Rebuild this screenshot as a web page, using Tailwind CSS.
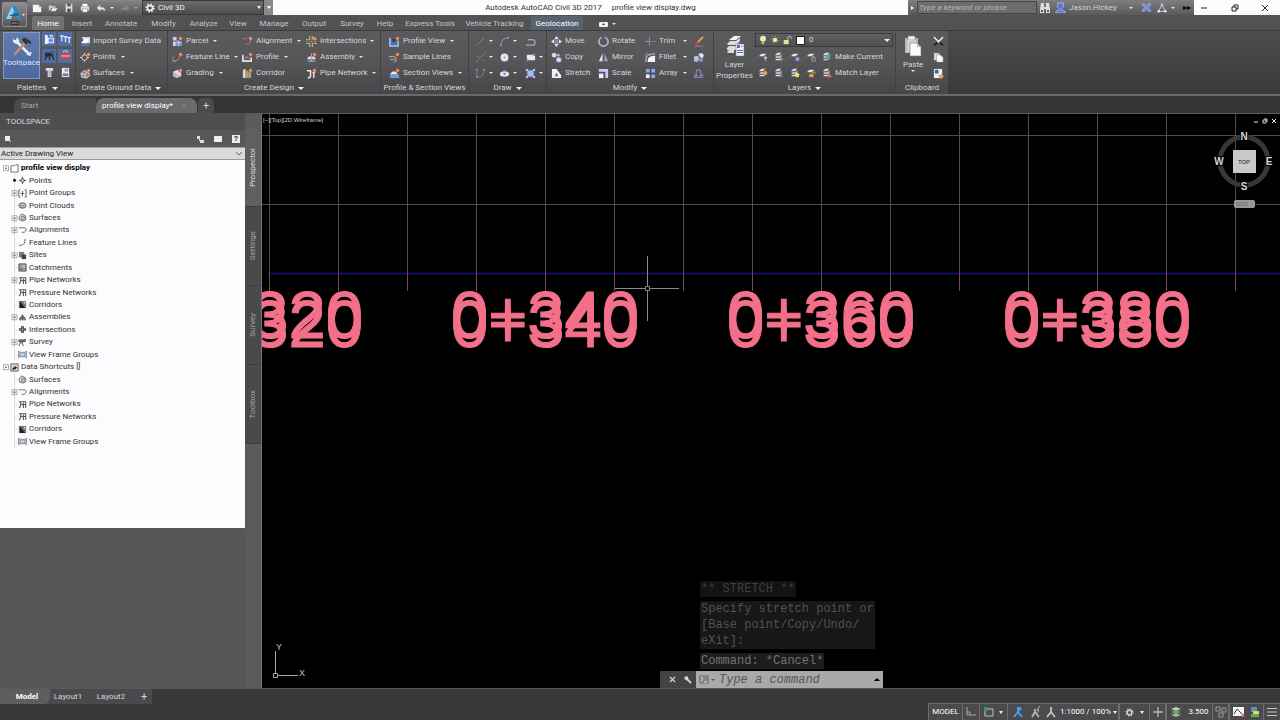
<!DOCTYPE html>
<html lang="en">
<head>
    <meta charset="UTF-8">
    <meta name="viewport" content="width=device-width, initial-scale=1.0">
    <title>Autodesk AutoCAD Civil 3D 2017</title>
    <script src="https://cdn.jsdelivr.net/npm/@tailwindcss/browser@4"></script>
</head>
<body class="flex h-screen flex-col overflow-hidden bg-[#38373a] font-['Roboto','Open_Sans',sans-serif] text-[8px] leading-[12px] text-[#d8d7d9]">

    <!-- Icon set -->
    <svg class="hidden" xmlns="http://www.w3.org/2000/svg">
        <defs>
            <symbol id="new" viewBox="0 0 12 12"><path d="M1 2h7l3 3v6H1z" fill="#f4f4f4"/><path d="M8 2v3h3" fill="#aaa"/></symbol>
            <symbol id="open" viewBox="0 0 12 12"><path d="M1 10V3h3l1 1h4v2H4z" fill="#cfcfcf"/><path d="M3 10l2-4h7l-3 4z" fill="#f2f2f2" stroke="#666" stroke-width=".5"/></symbol>
            <symbol id="save" viewBox="0 0 12 12"><path d="M2 1h8v10H2z" fill="#d8d8d8"/><path d="M4 1h4v3H4zM4 7h4v4H4z" fill="#4a4a4e"/></symbol>
            <symbol id="print" viewBox="0 0 12 12"><path d="M3 1h6v3H3z" fill="#fff"/><path d="M1 4h10v5H1z" fill="#dcdcdc"/><path d="M3 7h6v4H3z" fill="#fff" stroke="#777" stroke-width=".6"/></symbol>
            <symbol id="undo" viewBox="0 0 12 12"><path d="M5 2v3h2q4 0 4 5-2-3-6-2v2L1 6z" fill="#e2e2e2"/></symbol>
            <symbol id="redo" viewBox="0 0 12 12"><path d="M7 2v3H5q-4 0-4 5 2-3 6-2v2l4-4z" fill="#8a898d"/></symbol>
            <symbol id="gear" viewBox="0 0 12 12"><circle cx="6" cy="6" r="4.6" fill="none" stroke="currentColor" stroke-width="1.8" stroke-dasharray="1.8 1.8"/><circle cx="6" cy="6" r="3" fill="none" stroke="currentColor" stroke-width="1.8"/></symbol>
            <symbol id="spark" viewBox="0 0 12 12"><circle cx="9.3" cy="2.7" r="2.1" fill="#e2703a"/><circle cx="9.3" cy="2.7" r=".8" fill="#ffc59a"/></symbol>

            <symbol id="tools" viewBox="0 0 22 20"><path d="M6 6l12 12" stroke="#e9e9ec" stroke-width="2.6" stroke-linecap="round"/><path d="M2 2v4l3 2 3-1 0-3-2-3-1 3-2 0z" fill="#e9e9ec"/><path d="M16 18l3 1 1-3" fill="none" stroke="#e9e9ec" stroke-width="1.5"/><path d="M14 7L4 18" stroke="#c98a6a" stroke-width="2.6" stroke-linecap="round"/><path d="M10 3l4-2 6 4 1 4-2-1-2-1-2 2-3-3z" fill="#36363c" stroke="#8d8d96" stroke-width=".5"/></symbol>
            <symbol id="pal1" viewBox="0 0 12 12"><path d="M1 1h3v10H1zM4 4h7v6H4z" fill="#eef3fb"/><path d="M5 5h5v4H5z" fill="#6f96d8"/><path d="M6 1h4v2H6z" fill="#c7d9f4"/></symbol>
            <symbol id="pal2" viewBox="0 0 12 12"><path d="M0 2h4M4 3h4M8 4h4M2 2v6M6 3v6M10 4v6" stroke="#dfe8f8" stroke-width="1.4" fill="none"/></symbol>
            <symbol id="pal3" viewBox="0 0 12 12"><path d="M1 3h9v4H1z" fill="#2c2c30"/><path d="M4 5L1 11M6 5v6M8 5l3 6" stroke="#26262a" stroke-width="1.3"/><circle cx="9" cy="3" r="2" fill="#55555c"/></symbol>
            <symbol id="pal4" viewBox="0 0 12 12"><path d="M4 3V1h4v2" fill="none" stroke="#dcdcdc"/><path d="M1 3h10v7H1z" fill="#c34b4b"/><path d="M1 6h10v1H1z" fill="#f6dada"/></symbol>
            <symbol id="pal5" viewBox="0 0 12 12"><path d="M2 1h8v3H8v7H4V4H2z" fill="#dddddf"/><path d="M5 4h2v6H5z" fill="#aaaaae"/></symbol>
            <symbol id="pal6" viewBox="0 0 12 12"><path d="M2 1h8v10H2z" fill="#ececef"/><path d="M3 7h6v3H3z" fill="#5b78c4"/><path d="M5 2h4v3H5z" fill="#9a9aa2"/></symbol>

            <symbol id="import" viewBox="0 0 12 12"><path d="M2 1h9v7H5z" fill="#c9d9ee"/><path d="M1 8l4-5h5l-3 5z" fill="#fff"/><path d="M1 9h9v2H1z" fill="#4c7bc4"/></symbol>
            <symbol id="points" viewBox="0 0 12 12"><path d="M5 1v10M0 6h10" stroke="#ddd"/><circle cx="5" cy="6" r="3" fill="#555" stroke="#ddd"/><use href="#spark"/></symbol>
            <symbol id="surfaces" viewBox="0 0 12 12"><path d="M1 6l3-3 5 1 2 4-4 3-5-1z" fill="#888d95" stroke="#eee" stroke-width=".8"/><path d="M1 6l4 1 4-3M5 7l2 4" stroke="#eee" stroke-width=".8" fill="none"/><use href="#spark"/></symbol>
            <symbol id="parcel" viewBox="0 0 12 12"><path d="M1 1h4v4H1zM1 6h4v5H1z" fill="#c9d0e8"/><path d="M4 4l7 2v5H4z" fill="#7d90cf"/><path d="M5 7h5M7 5v6" stroke="#dde2f6" stroke-width=".7"/><use href="#spark"/></symbol>
            <symbol id="feature" viewBox="0 0 12 12"><path d="M1 10q7 0 8-7" stroke="#9a9aa0" fill="none"/><path d="M1 5v5h3" stroke="#8aa08a" fill="none"/><use href="#spark"/></symbol>
            <symbol id="grading" viewBox="0 0 12 12"><path d="M1 4l5-2 4 3v4l-5 2-4-2z" fill="#d9dbe2"/><path d="M1 5l8 5M1 7l5 4" stroke="#8d93a8"/><use href="#spark"/></symbol>
            <symbol id="align" viewBox="0 0 12 12"><path d="M1 3h4M5 9q5 0 4-5" stroke="#8d8db4" fill="none"/><path d="M3 9h2" stroke="#c66"/><use href="#spark"/></symbol>
            <symbol id="profile" viewBox="0 0 12 12"><path d="M1 3v7h9V6" stroke="#e4e4ea" stroke-width="1.8" fill="none"/><path d="M3 8l2-3 3 2" stroke="#92a8dc" fill="none"/><use href="#spark"/></symbol>
            <symbol id="corridor" viewBox="0 0 12 12"><path d="M1 2l3-1v10H1z" fill="#d8d8da"/><path d="M4 3h3v8H4z" fill="#b59a5f"/><path d="M7 4l3 1v6H7z" fill="#86b080"/><use href="#spark"/></symbol>
            <symbol id="intersect" viewBox="0 0 12 12"><path d="M4 0v4H0M7 0v4h5M4 12V8H0M7 12V8h5" stroke="#b9c98d" fill="none"/><path d="M5.500 0v12M0 6h12" stroke="#8f8f70" stroke-dasharray="2 1"/><use href="#spark"/></symbol>
            <symbol id="assembly" viewBox="0 0 12 12"><path d="M1 8l2-3h6l2 3z" fill="#d6dbe8"/><path d="M6 1v10M2 10h8" stroke="#9aa6cc" stroke-width="1.2"/><use href="#spark"/></symbol>
            <symbol id="pipe" viewBox="0 0 12 12"><path d="M1 3h4v5q0 3-3 3M7 5h3M8.500 5v6" stroke="#eaeaee" stroke-width="1.6" fill="none"/><use href="#spark"/></symbol>
            <symbol id="profview" viewBox="0 0 12 12"><path d="M1 2v9h9V5" fill="#4c70b4" stroke="#b8cdf2" stroke-width="1.4"/><path d="M3 4l2 3 3-2v-2H3z" fill="#404046"/><use href="#spark"/></symbol>
            <symbol id="sample" viewBox="0 0 12 12"><path d="M0 5h5q3 0 3 3t-3 3" stroke="#b4b4bc" fill="none"/><path d="M1 8h6" stroke="#b4b4bc"/><use href="#spark"/></symbol>
            <symbol id="section" viewBox="0 0 12 12"><path d="M1 7q4-7 9 0z" fill="#e6ecf8"/><path d="M1 7h10v4H1z" fill="#6f98dc"/><use href="#spark"/></symbol>

            <symbol id="line" viewBox="0 0 12 12"><path d="M2 10L10 2" stroke="#8d8c90"/></symbol>
            <symbol id="arc" viewBox="0 0 12 12"><path d="M2 11Q2 2 10 2" stroke="#9f9fc0" fill="none"/><circle cx="2" cy="10" r="1" fill="#8ea3e0"/><circle cx="10" cy="2" r="1" fill="#8ea3e0"/></symbol>
            <symbol id="pline" viewBox="0 0 12 12"><path d="M1 10h7q3 0 3-3t-3-3H4" stroke="#a6a6bc" stroke-width="1.300" fill="none"/><circle cx="4" cy="4" r="1" fill="#8ea3e0"/></symbol>
            <symbol id="xline" viewBox="0 0 12 12"><path d="M1 11L11 1" stroke="#8d8c90" stroke-dasharray="3 1"/><path d="M2 4l2 2M8 8l2 2" stroke="#8d8c90"/></symbol>
            <symbol id="circle" viewBox="0 0 12 12"><circle cx="6" cy="6" r="4.300" fill="#e4e4ee"/><circle cx="6" cy="6" r="1" fill="#8a9be0"/></symbol>
            <symbol id="rect" viewBox="0 0 12 12"><path d="M2 3h9v6H2z" fill="#e8e8f0"/><circle cx="2.500" cy="9" r="1.300" fill="#6c88dc"/><circle cx="10" cy="3" r="1.300" fill="#6c88dc"/></symbol>
            <symbol id="spline" viewBox="0 0 12 12"><path d="M2 2v8q8 0 8-8" stroke="#85858c" fill="none"/><path d="M1 1h2v2H1zM1 9h2v2H1zM9 1h2v2H9z" fill="#7d92a8"/></symbol>
            <symbol id="ellipse" viewBox="0 0 12 12"><ellipse cx="6" cy="6.500" rx="5" ry="3" fill="#e4e4ee"/><circle cx="6" cy="6.500" r="1.200" fill="#5c78d4"/><circle cx="6" cy="3" r="1" fill="#8a9be0"/></symbol>
            <symbol id="hatch" viewBox="0 0 12 12"><path d="M2.500 2.500h7v7h-7z" fill="#a9bdf0" stroke="#6f8de0"/><path d="M1 1h2v2H1zM9 1h2v2H9zM1 9h2v2H1zM9 9h2v2H9z" fill="#dfe4fa"/></symbol>

            <symbol id="move" viewBox="0 0 12 12"><path d="M6 0l2.500 3.500h-5zM6 12l2.500-3.500h-5zM0 6l3.500-2.500v5zM12 6L8.500 3.500v5z" fill="#e8e8ee"/><path d="M4.500 4.500h3v3h-3z" fill="#7b97e4"/></symbol>
            <symbol id="copy" viewBox="0 0 12 12"><circle cx="3.500" cy="3.500" r="2.600" fill="#d8d8e0"/><circle cx="8" cy="3.500" r="1.500" fill="#b4b4c4"/><circle cx="8.500" cy="8.500" r="3" fill="#a8b8ec"/><circle cx="8.500" cy="8.500" r="1.500" fill="#e8ecfa"/></symbol>
            <symbol id="stretch" viewBox="0 0 12 12"><path d="M1 1h5l5 7v3H1z" fill="#f1f1f4"/><path d="M4 9l2-4 2 4z" fill="#4d6cc0"/></symbol>
            <symbol id="rotate" viewBox="0 0 12 12"><path d="M4 1.500A5 5 0 1 0 8 1.500" stroke="#b9bcd8" stroke-width="1.600" fill="none"/><path d="M6.500 0L10 1.500 7.500 4z" fill="#7e92dc"/></symbol>
            <symbol id="mirror" viewBox="0 0 12 12"><path d="M5 1v9H1z" fill="#e3e3e8"/><path d="M7 1v9h4z" fill="#8fa3cc"/></symbol>
            <symbol id="scale" viewBox="0 0 12 12"><path d="M1 1h10v10H8V4H1z" fill="#c5cdf0"/><path d="M1 6h5v5H1z" fill="#f2f2f6"/></symbol>
            <symbol id="trim" viewBox="0 0 12 12"><path d="M0 6h5M5 1v10" stroke="#9494b4"/><path d="M7 6h5" stroke="#7d96e0" stroke-dasharray="2 1"/></symbol>
            <symbol id="fillet" viewBox="0 0 12 12"><path d="M3 11V9q0-5 8-5v7z" fill="#f3f3f6"/><path d="M1 11V8q0-6 10-6" stroke="#dcdce6" fill="none"/><path d="M1 5V2h3" stroke="#8e9ccc" fill="none"/></symbol>
            <symbol id="array" viewBox="0 0 12 12"><path d="M1 1h4v4H1zM7 1h4v4H7zM7 7h4v4H7z" fill="#8fabf0"/><path d="M1 7h4v4H1z" fill="#f0f0f4"/></symbol>
            <symbol id="erase" viewBox="0 0 12 12"><path d="M11 1L5 7" stroke="#e4a65e" stroke-width="1.800"/><path d="M5 6L2 9l1 1 3-2z" fill="#d2424c"/><path d="M2 11h9" stroke="#a58d62"/></symbol>
            <symbol id="explode" viewBox="0 0 12 12"><path d="M1 5l4-1 2 3-2 4-4-1z" fill="#b5c0e8"/><path d="M6 2l4-1 2 3-2 3-3-2z" fill="#dadff2"/><path d="M7 7l4 0-1 4-3-1z" fill="#8fa0dc"/></symbol>
            <symbol id="offset" viewBox="0 0 12 12"><path d="M1 10h10M1 8h3q-2-6 2-6t2 6h3" stroke="#8591bc" fill="none" stroke-width="1.200"/></symbol>

            <symbol id="layers" viewBox="0 0 20 22"><path d="M4 5l5-4h7l-5 4z" fill="#f4f4f6"/><path d="M2 9l3-3h6l4-3v3l-4 4H3zM2 13l2-2h7l3-3v3l-3 4H2zM2 17l2-2h5v3H3z" fill="#dcdce0"/><path d="M11 9h8v12h-8z" fill="#f0f2f8" stroke="#777" stroke-width=".5"/><path d="M12 10h3v3h-3zM12 15h6v1h-6zM12 17h6v1h-6z" fill="#4c74c0"/><path d="M16 11h2v1h-2z" fill="#888"/></symbol>
            <symbol id="stack" viewBox="0 0 12 12"><path d="M1 4l3-3h5L6 4zM1 7l2-2h4l2-2v2L7 7zM1 10l2-2h4l2-2v2l-2 2z" fill="#dadadf"/></symbol>
            <symbol id="sheet" viewBox="0 0 12 12"><path d="M1 5l3-3h6L7 5z" fill="#e2e2e6"/></symbol>
            <symbol id="bulb" viewBox="0 0 12 12"><circle cx="6" cy="4.500" r="3.500" fill="#f4ef9e"/><path d="M4.500 8h3v3h-3z" fill="#b9b9a8"/></symbol>
            <symbol id="sun" viewBox="0 0 12 12"><circle cx="6" cy="6" r="2.800" fill="#f2ee9a"/><circle cx="6" cy="6" r="4.500" fill="none" stroke="#d9d6a0" stroke-dasharray="1 2.500"/></symbol>
            <symbol id="lock" viewBox="0 0 12 12"><path d="M2 6h6v5H2z" fill="#f0df92"/><path d="M7 6V3.500a2 2 0 0 1 4 0V5" stroke="#d4d4d4" fill="none"/></symbol>

            <symbol id="paste" viewBox="0 0 18 22"><path d="M1 3h13v15H1z" fill="#b9b9bb"/><path d="M4 1h7v4H4z" fill="#f0f0ee" stroke="#888" stroke-width=".6"/><path d="M3 5h9v12H3z" fill="#d0d0d0"/><path d="M6 8h7l4 4v9H6z" fill="#fbfbfb" stroke="#777" stroke-width=".6"/><path d="M13 8v4h4" fill="#bbb"/></symbol>
            <symbol id="cut" viewBox="0 0 12 12"><path d="M1 1l6 6M11 1L5 7" stroke="#f0f0f0" stroke-width="1.600"/><path d="M5 7l-4 3M7 7l4 3" stroke="#222" stroke-width="2"/></symbol>
            <symbol id="clip" viewBox="0 0 12 12"><path d="M1 1h5l1 1v7H1z" fill="#d4d4d6"/><path d="M4 3h4l3 3v5H4z" fill="#fbfbfb" stroke="#888" stroke-width=".5"/></symbol>
            <symbol id="special" viewBox="0 0 12 12"><path d="M1 1h9v10H1z" fill="#eceef6"/><path d="M2 2h4v4H2z" fill="#41649f"/><path d="M6 8h3V6l3 3-3 3v-2H6z" fill="#d99a52"/></symbol>

            <symbol id="binoc" viewBox="0 0 12 12"><path d="M2 1h3v4h2V1h3l1 6v4H7V7H5v4H1V7z" fill="#dedee0"/><path d="M2 8h2v2H2zM8 8h2v2H8z" fill="#56555a"/></symbol>
            <symbol id="user" viewBox="0 0 12 12"><path d="M3 1h6v5L7 8v1l4 1v2H1v-2l4-1V8L3 6z" fill="#5274dc" stroke="#c6d2fa" stroke-width=".7"/></symbol>
            <symbol id="exchange" viewBox="0 0 12 12"><path d="M1 2h3l2 3 2-3h3L8 6l3 4H8L6 7l-2 3H1l3-4z" fill="#6c8cec" stroke="#c8d4fc" stroke-width=".5"/></symbol>
            <symbol id="tri" viewBox="0 0 12 12"><path d="M6 2l4 8H2z" fill="none" stroke="#c0cce8" stroke-width="1.200"/><circle cx="6" cy="2" r="1.500" fill="#b8c8f4"/><circle cx="2" cy="10" r="1.500" fill="#eee"/><circle cx="10" cy="10" r="1.500" fill="#eee"/></symbol>

            <!-- tree icons -->
            <symbol id="t-dwg" viewBox="0 0 10 10"><path d="M1 2h4l1-1h3v8H1z" fill="#fff" stroke="#666"/></symbol>
            <symbol id="t-short" viewBox="0 0 10 10"><path d="M1 1h8v8H1z" fill="#ddd" stroke="#555"/><path d="M3 8V5h2V3l3 2-2 2H5z" fill="#222"/></symbol>
            <symbol id="t-points" viewBox="0 0 10 10"><path d="M5 1v8M1 5h8" stroke="#444"/><circle cx="5" cy="5" r="2" fill="#ccc" stroke="#444"/></symbol>
            <symbol id="t-group" viewBox="0 0 10 10"><path d="M2.500 1H1v8h1.500M7.500 1H9v8H7.500M5 2v6M3 5h4" stroke="#555" fill="none"/></symbol>
            <symbol id="t-cloud" viewBox="0 0 10 10"><ellipse cx="5" cy="5" rx="4" ry="3" fill="#ccc" stroke="#555"/><path d="M2 5h6M3 7h4" stroke="#555" stroke-dasharray="1 1"/></symbol>
            <symbol id="t-surface" viewBox="0 0 10 10"><path d="M1 5l3-4 4 2 1 4-3 2-4-1z" fill="#ddd" stroke="#666"/><path d="M4 4h3v3H4z" fill="none" stroke="#777"/></symbol>
            <symbol id="t-align" viewBox="0 0 10 10"><path d="M1 2h6q2 0 2 2t-2 3H4" fill="none" stroke="#666"/></symbol>
            <symbol id="t-feature" viewBox="0 0 10 10"><path d="M1 8h3q4-1 4-7" fill="none" stroke="#555"/></symbol>
            <symbol id="t-site" viewBox="0 0 10 10"><path d="M1 1h6v6H1z" fill="#6d7f90"/><path d="M4 4h5v5H4z" fill="#444"/></symbol>
            <symbol id="t-catch" viewBox="0 0 10 10"><path d="M1 1h8v8H1z" fill="#8fa0a4" stroke="#555"/><path d="M5 2h3v3H5z" fill="#d9b95c"/><path d="M2 6h3v2H2z" fill="#4a7ab8"/></symbol>
            <symbol id="t-pipe" viewBox="0 0 10 10"><path d="M1 2h8M3 2v3q0 3-2 4M6 3v6M8.500 2v7M3 5h5" fill="none" stroke="#555" stroke-width="1.200"/></symbol>
            <symbol id="t-corr" viewBox="0 0 10 10"><path d="M1 1h8v8H1z" fill="#777"/><path d="M2 1l6 8H2z" fill="#222"/><path d="M6 2h2v3z" fill="#ddd"/></symbol>
            <symbol id="t-assem" viewBox="0 0 10 10"><path d="M1 8l1-3 2-1V2h2v2l2 1 1 3z" fill="#555"/><path d="M3 6h1v2H3zM6 6h1v2H6z" fill="#ccc"/></symbol>
            <symbol id="t-inter" viewBox="0 0 10 10"><path d="M3.500 1h3v2.500H9v3H6.500V9h-3V6.500H1v-3h2.500z" fill="#444"/><path d="M5 1v8M1 5h8" stroke="#aaa" stroke-width=".6"/></symbol>
            <symbol id="t-survey" viewBox="0 0 10 10"><path d="M1 2h7v2H1zM3 4L1 9M4 4l2 5M9 1L4 6" stroke="#555" fill="#777"/></symbol>
            <symbol id="t-frame" viewBox="0 0 10 10"><path d="M1 1v8M9 1v8" stroke="#444"/><path d="M2 2h6v6H2z" fill="#8aa2b8"/><path d="M3 4h4v2H3z" fill="#dce6ee"/></symbol>
        </defs>
    </svg>

    <!-- Title bar and ribbon tabs -->
    <header class="flex h-[30px] shrink-0 bg-[#525154]">
        <button aria-label="Application menu" class="m-[2px] mr-0 flex h-[25px] w-[25px] shrink-0 items-center justify-center rounded-[2px] border border-[#8f8e92] bg-gradient-to-b from-[#8e8d90] to-[#59585b]">
            <svg class="h-[22px] w-[22px]" viewBox="0 0 22 22"><path d="M2 15L8 2h4l5 13h-4l-3-8-3 8z" fill="#2a8fc4"/><path d="M2 15l6-13 2 5-3 8z" fill="#8fd0ee"/><path d="M6 11l8-2 1 3H6z" fill="#156a9c"/><path d="M18 10h3l-1.500 2z" fill="#eee"/><path d="M7 17h8v4H7z" fill="#333"/><path d="M8 19h6" stroke="#bbb" stroke-dasharray="2 .6"/></svg>
        </button>
        <div class="flex min-w-0 flex-1 flex-col">
            <div class="flex h-[15px] shrink-0 items-stretch bg-[#fdfdfd]">
                <div class="flex w-[115px] shrink-0 items-center gap-[6px] bg-gradient-to-b from-[#858487] to-[#59585b] pl-[5px]">
                    <button aria-label="New"><svg class="size-[10px]"><use href="#new"/></svg></button>
                    <button aria-label="Open"><svg class="size-[10px]"><use href="#open"/></svg></button>
                    <button aria-label="Save"><svg class="size-[10px]"><use href="#save"/></svg></button>
                    <button aria-label="Plot"><svg class="size-[10px]"><use href="#print"/></svg></button>
                    <button aria-label="Undo" class="flex items-center gap-1"><svg class="size-[10px]"><use href="#undo"/></svg><i class="border-x-2 border-t-2 border-x-transparent border-t-gray-200"></i></button>
                    <button aria-label="Redo" class="flex items-center gap-1"><svg class="size-[10px]"><use href="#redo"/></svg><i class="border-x-2 border-t-2 border-x-transparent border-t-gray-400"></i></button>
                </div>
                <label class="flex w-[122px] shrink-0 items-center gap-[3px] border border-[#38373a] bg-gradient-to-b from-[#6c6b6e] to-[#4c4b4e] px-[2px] text-gray-100">
                    <svg class="size-[10px] shrink-0"><use href="#gear"/></svg>
                    <select aria-label="Workspace" class="min-w-0 flex-1 appearance-none"><option>Civil 3D</option></select>
                    <i class="border-x-2 border-t-[3px] border-x-transparent border-t-gray-100"></i>
                </label>
                <button aria-label="Customize Quick Access Toolbar" class="flex w-[9px] shrink-0 items-center justify-center bg-[#8a898c]"><i class="border-x-2 border-t-[3px] border-x-transparent border-t-white"></i></button>
                <h1 class="flex flex-1 items-center justify-center gap-[10px] text-[#333]"><span>Autodesk AutoCAD Civil 3D 2017</span><span>profile view display.dwg</span></h1>
                <div class="flex w-[286px] shrink-0 items-center bg-gradient-to-b from-[#7f7e81] to-[#59585b]">
                    <button aria-label="Collapse search" class="flex h-full w-[9px] items-center justify-center"><i class="border-y-2 border-l-[3px] border-y-transparent border-l-white"></i></button>
                    <input aria-label="Search" placeholder="Type a keyword or phrase" class="h-[13px] w-[120px] border border-[#454447] bg-[#6b6e6b] px-[1px] italic placeholder:text-[#b6b6b6]">
                    <button aria-label="Find" class="ml-[2px]"><svg class="size-3"><use href="#binoc"/></svg></button>
                    <button class="ml-[4px] flex items-center gap-[3px]"><svg class="size-[11px]"><use href="#user"/></svg>Jason.Hickey<i class="ml-[9px] border-x-2 border-t-2 border-x-transparent border-t-gray-200"></i></button>
                    <button aria-label="Exchange Apps" class="ml-[8px]"><svg class="size-[11px]"><use href="#exchange"/></svg></button>
                    <button aria-label="A360" class="ml-[5px] flex items-center gap-1"><svg class="size-[10px]"><use href="#tri"/></svg><i class="border-x-2 border-t-2 border-x-transparent border-t-gray-200"></i></button>
                    <button aria-label="More" class="mr-[3px] ml-auto text-black">▸▸</button>
                </div>
                <div class="flex w-[86px] shrink-0 items-center justify-between px-[6px] text-[#222]">
                    <button aria-label="Minimize"><svg class="size-[8px]" viewBox="0 0 8 8"><path d="M1 4h6" stroke="#222"/></svg></button>
                    <button aria-label="Restore"><svg class="size-[8px]" viewBox="0 0 8 8"><path d="M1 3h4v4H1zM3 3V1h4v4H5" fill="none" stroke="#222"/></svg></button>
                    <button aria-label="Close" class="mr-[5px]"><svg class="size-[8px]" viewBox="0 0 8 8"><path d="M1 1l6 6M7 1L1 7" stroke="#222"/></svg></button>
                </div>
            </div>
            <nav class="flex h-[15px] items-end pl-[5px] text-[#c6c5c8] *:h-[14px] *:shrink-0 *:pt-[2px]">
                <button class="w-8 rounded-t-[2px] bg-[#727174] text-white">Home</button>
                <button class="w-9">Insert</button>
                <button class="w-[42px]">Annotate</button>
                <button class="w-[43px]">Modify</button>
                <button class="w-[37px]">Analyze</button>
                <button class="w-[32px]">View</button>
                <button class="w-10">Manage</button>
                <button class="w-10">Output</button>
                <button class="w-9">Survey</button>
                <button class="w-[30px]">Help</button>
                <button class="w-[60px]">Express Tools</button>
                <button class="w-[69px]">Vehicle Tracking</button>
                <button class="ml-[2px] w-[52px] bg-[#566370] text-white">Geolocation</button>
                <button aria-label="Minimize ribbon" class="ml-[16px] flex items-center gap-[4px]"><svg class="h-[5px] w-[9px]" viewBox="0 0 9 5"><rect width="9" height="5" rx="1" fill="#eee"/><path d="M3 3l1.500-2L6 3z" fill="#444"/></svg><i class="border-x-2 border-t-2 border-x-transparent border-t-gray-200"></i></button>
            </nav>
        </div>
    </header>

    <!-- Ribbon -->
    <div class="flex h-[66px] shrink-0 border-t border-b-2 border-t-[#3a393c] border-b-[#69686b] bg-gradient-to-b from-[#4c4b4e] to-[#39383a]">
        <section class="flex w-[76px] shrink-0 flex-col border-r border-[#414043] bg-gradient-to-b from-[#5b5a5d] via-[#565558] to-[#464548]">
            <div class="flex h-[52px] gap-[2px] pt-[1px] pl-[3px]">
                <button class="flex h-[47px] w-[37px] flex-col items-center gap-[1px] border border-[#8199c6] bg-gradient-to-b from-[#5f7db4] to-[#4c689e] pt-[3px] text-[#dde4f2]"><svg class="h-5 w-[22px]"><use href="#tools"/></svg>Toolspace</button>
                <div class="grid h-[47px] grid-cols-2 content-between gap-x-[2px] *:flex *:h-[14px] *:w-[14px] *:items-center *:justify-center">
                    <button aria-label="Prospector" class="bg-[#4f6da6]"><svg class="size-[11px]"><use href="#pal1"/></svg></button>
                    <button aria-label="Settings" class="bg-[#4f6da6]"><svg class="size-[11px]"><use href="#pal2"/></svg></button>
                    <button aria-label="Survey" class="bg-[#4f6da6]"><svg class="size-[11px]"><use href="#pal3"/></svg></button>
                    <button aria-label="Toolbox" class="bg-[#4f6da6]"><svg class="size-[11px]"><use href="#pal4"/></svg></button>
                    <button aria-label="Tool palettes"><svg class="size-[11px]"><use href="#pal5"/></svg></button>
                    <button aria-label="Properties"><svg class="size-[11px]"><use href="#pal6"/></svg></button>
                </div>
            </div>
            <h2 class="flex flex-1 items-center justify-center gap-[6px]">Palettes<i class="border-x-[3px] border-t-[3px] border-x-transparent border-t-gray-100"></i></h2>
        </section>

        <section class="flex w-[92px] shrink-0 flex-col border-r border-[#414043] bg-gradient-to-b from-[#5b5a5d] via-[#565558] to-[#464548]">
            <div class="flex h-[52px] flex-col pt-[2px] pl-[4px] *:flex *:h-4 *:items-center *:gap-[2px] [&_svg]:size-[11px]">
                <button><svg><use href="#import"/></svg>Import Survey Data</button>
                <button><svg><use href="#points"/></svg>Points<i class="ml-[3px] border-x-2 border-t-2 border-x-transparent border-t-gray-200"></i></button>
                <button><svg><use href="#surfaces"/></svg>Surfaces<i class="ml-[3px] border-x-2 border-t-2 border-x-transparent border-t-gray-200"></i></button>
            </div>
            <h2 class="flex flex-1 items-center justify-center gap-[4px]">Create Ground Data<i class="border-x-[3px] border-t-[3px] border-x-transparent border-t-gray-100"></i></h2>
        </section>

        <section class="flex w-[213px] shrink-0 flex-col border-r border-[#414043] bg-gradient-to-b from-[#5b5a5d] via-[#565558] to-[#464548]">
            <div class="grid h-[52px] grid-flow-col grid-cols-[70px_64px_auto] grid-rows-[16px_16px_16px] pt-[2px] pl-[4px] *:flex *:items-center *:gap-[3px] [&_svg]:size-[11px]">
                <button><svg><use href="#parcel"/></svg>Parcel<i class="ml-[2px] border-x-2 border-t-2 border-x-transparent border-t-gray-200"></i></button>
                <button><svg><use href="#feature"/></svg>Feature Line<i class="ml-[1px] border-x-2 border-t-2 border-x-transparent border-t-gray-200"></i></button>
                <button><svg><use href="#grading"/></svg>Grading<i class="ml-[2px] border-x-2 border-t-2 border-x-transparent border-t-gray-200"></i></button>
                <button><svg><use href="#align"/></svg>Alignment<i class="ml-[2px] border-x-2 border-t-2 border-x-transparent border-t-gray-200"></i></button>
                <button><svg><use href="#profile"/></svg>Profile<i class="ml-[2px] border-x-2 border-t-2 border-x-transparent border-t-gray-200"></i></button>
                <button><svg><use href="#corridor"/></svg>Corridor</button>
                <button><svg><use href="#intersect"/></svg>Intersections<i class="ml-[1px] border-x-2 border-t-2 border-x-transparent border-t-gray-200"></i></button>
                <button><svg><use href="#assembly"/></svg>Assembly<i class="ml-[1px] border-x-2 border-t-2 border-x-transparent border-t-gray-200"></i></button>
                <button><svg><use href="#pipe"/></svg>Pipe Network<i class="ml-[1px] border-x-2 border-t-2 border-x-transparent border-t-gray-200"></i></button>
            </div>
            <h2 class="flex flex-1 items-center justify-center gap-[4px]">Create Design<i class="border-x-[3px] border-t-[3px] border-x-transparent border-t-gray-100"></i></h2>
        </section>

        <section class="flex w-[88px] shrink-0 flex-col border-r border-[#414043] bg-gradient-to-b from-[#5b5a5d] via-[#565558] to-[#464548]">
            <div class="flex h-[52px] flex-col pt-[2px] pl-[8px] *:flex *:h-4 *:items-center *:gap-[3px] [&_svg]:size-[11px]">
                <button><svg><use href="#profview"/></svg>Profile View<i class="ml-[2px] border-x-2 border-t-2 border-x-transparent border-t-gray-200"></i></button>
                <button><svg><use href="#sample"/></svg>Sample Lines</button>
                <button><svg><use href="#section"/></svg>Section Views<i class="ml-[2px] border-x-2 border-t-2 border-x-transparent border-t-gray-200"></i></button>
            </div>
            <h2 class="flex flex-1 items-center justify-center whitespace-nowrap">Profile &amp; Section Views</h2>
        </section>

        <section class="flex w-[78px] shrink-0 flex-col border-r border-[#414043] bg-gradient-to-b from-[#5b5a5d] via-[#565558] to-[#464548]">
            <div class="grid h-[52px] grid-cols-[24px_26px_auto] grid-rows-[16px_16px_16px] pt-[2px] pl-[6px] *:flex *:items-center *:gap-[3px] [&_svg]:size-[11px]">
                <button aria-label="Line"><svg><use href="#line"/></svg><i class="border-x-2 border-t-2 border-x-transparent border-t-gray-200"></i></button>
                <button aria-label="Arc"><svg><use href="#arc"/></svg><i class="border-x-2 border-t-2 border-x-transparent border-t-gray-200"></i></button>
                <button aria-label="Polyline"><svg><use href="#pline"/></svg></button>
                <button aria-label="Construction line"><svg><use href="#xline"/></svg><i class="border-x-2 border-t-2 border-x-transparent border-t-gray-200"></i></button>
                <button aria-label="Circle"><svg><use href="#circle"/></svg><i class="border-x-2 border-t-2 border-x-transparent border-t-gray-200"></i></button>
                <button aria-label="Rectangle"><svg><use href="#rect"/></svg><i class="border-x-2 border-t-2 border-x-transparent border-t-gray-200"></i></button>
                <button aria-label="Spline"><svg><use href="#spline"/></svg><i class="border-x-2 border-t-2 border-x-transparent border-t-gray-200"></i></button>
                <button aria-label="Ellipse"><svg><use href="#ellipse"/></svg><i class="border-x-2 border-t-2 border-x-transparent border-t-gray-200"></i></button>
                <button aria-label="Hatch"><svg><use href="#hatch"/></svg><i class="border-x-2 border-t-2 border-x-transparent border-t-gray-200"></i></button>
            </div>
            <h2 class="flex flex-1 items-center justify-center gap-[4px]">Draw<i class="border-x-[3px] border-t-[3px] border-x-transparent border-t-gray-100"></i></h2>
        </section>

        <section class="flex w-[167px] shrink-0 flex-col border-r border-[#414043] bg-gradient-to-b from-[#5b5a5d] via-[#565558] to-[#464548]">
            <div class="grid h-[52px] grid-cols-[47px_47px_48px_auto] grid-rows-[16px_16px_16px] pt-[2px] pl-[4px] *:flex *:items-center *:gap-[3px] [&_svg]:size-[11px]">
                <button><svg><use href="#move"/></svg>Move</button>
                <button><svg><use href="#rotate"/></svg>Rotate</button>
                <button><svg><use href="#trim"/></svg>Trim<i class="mr-[6px] ml-auto border-x-2 border-t-2 border-x-transparent border-t-gray-200"></i></button>
                <button aria-label="Erase"><svg><use href="#erase"/></svg></button>
                <button><svg><use href="#copy"/></svg>Copy</button>
                <button><svg><use href="#mirror"/></svg>Mirror</button>
                <button><svg><use href="#fillet"/></svg>Fillet<i class="mr-[6px] ml-auto border-x-2 border-t-2 border-x-transparent border-t-gray-200"></i></button>
                <button aria-label="Explode"><svg><use href="#explode"/></svg></button>
                <button><svg><use href="#stretch"/></svg>Stretch</button>
                <button><svg><use href="#scale"/></svg>Scale</button>
                <button><svg><use href="#array"/></svg>Array<i class="mr-[6px] ml-auto border-x-2 border-t-2 border-x-transparent border-t-gray-200"></i></button>
                <button aria-label="Offset"><svg><use href="#offset"/></svg></button>
            </div>
            <h2 class="flex flex-1 items-center justify-center gap-[4px]">Modify<i class="border-x-[3px] border-t-[3px] border-x-transparent border-t-gray-100"></i></h2>
        </section>

        <section class="flex w-[182px] shrink-0 flex-col border-r border-[#414043] bg-gradient-to-b from-[#5b5a5d] via-[#565558] to-[#464548]">
            <div class="flex h-[52px] pt-[2px]">
                <button class="flex w-[41px] flex-col items-center pt-[2px] leading-[11px]"><svg class="mb-[2px] h-[22px] w-5"><use href="#layers"/></svg>Layer<br>Properties</button>
                <div class="flex flex-1 flex-col pr-[2px]">
                    <label class="mb-[2px] flex h-[14px] items-center gap-[2px] border border-[#3a393c] bg-gradient-to-b from-[#5f5e61] to-[#504f52] px-[2px]">
                        <svg class="size-[10px]"><use href="#bulb"/></svg>
                        <svg class="size-[10px]"><use href="#sun"/></svg>
                        <svg class="size-[10px]"><use href="#lock"/></svg>
                        <i class="mx-[2px] size-[9px] border border-[#222] bg-white"></i>
                        <select aria-label="Layer" class="min-w-0 flex-1 appearance-none"><option>0</option></select>
                        <i class="border-x-[3px] border-t-[3px] border-x-transparent border-t-gray-100"></i>
                    </label>
                    <div class="grid grid-cols-[16px_16px_16px_16px_auto] grid-rows-[16px_16px] pl-[3px] *:flex *:items-center *:gap-[3px] [&_svg]:size-[10px]">
                        <button aria-label="Layer off"><svg viewBox="0 0 12 12"><use href="#sheet"/><circle cx="9" cy="7" r="2" fill="#a9c0ee"/><path d="M8.500 9h1v2h-1z" fill="#ccc"/></svg></button>
                        <button aria-label="Layer isolate"><svg viewBox="0 0 12 12"><use href="#stack"/><path d="M8 11l3-3" stroke="#ccc"/></svg></button>
                        <button aria-label="Layer freeze"><svg viewBox="0 0 12 12"><use href="#sheet"/><circle cx="9" cy="8.500" r="2.500" fill="#8ba4e8"/></svg></button>
                        <button aria-label="Layer lock"><svg viewBox="0 0 12 12"><use href="#sheet"/><path d="M7 7h4v4H7zM8 7V5h2v2" fill="none" stroke="#8fb0a8"/></svg></button>
                        <button><svg viewBox="0 0 12 12"><use href="#stack"/><path d="M5 4l5-2v6l-5 3z" fill="#6c98a8"/></svg>Make Current</button>
                        <button aria-label="Turn all layers on"><svg viewBox="0 0 12 12"><use href="#stack"/><circle cx="9" cy="6" r="2.300" fill="#e8a048"/></svg></button>
                        <button aria-label="Unisolate"><svg viewBox="0 0 12 12"><use href="#stack"/><path d="M7 7l4 3-4 1z" fill="#6a88e0"/></svg></button>
                        <button aria-label="Thaw all layers"><svg viewBox="0 0 12 12"><use href="#stack"/><circle cx="8.500" cy="8.500" r="2.800" fill="#f1dc66"/></svg></button>
                        <button aria-label="Unlock"><svg viewBox="0 0 12 12"><use href="#sheet"/><path d="M4 7h5v4H4z" fill="#e2a23e"/><path d="M8 7V5h3v2" fill="none" stroke="#e2a23e"/></svg></button>
                        <button><svg viewBox="0 0 12 12"><use href="#stack"/><path d="M7 7l4 4M6 10h5" stroke="#c8785a" stroke-width="2"/></svg>Match Layer</button>
                    </div>
                </div>
            </div>
            <h2 class="flex flex-1 items-center justify-center gap-[4px]">Layers<i class="border-x-[3px] border-t-[3px] border-x-transparent border-t-gray-100"></i></h2>
        </section>

        <section class="flex w-[52px] shrink-0 flex-col bg-gradient-to-b from-[#5b5a5d] via-[#565558] to-[#464548]">
            <div class="flex h-[52px] justify-between pt-[2px] pr-[4px] pl-[7px]">
                <button class="flex flex-col items-center pt-[2px] leading-[11px]"><svg class="mb-[2px] h-[22px] w-[18px]"><use href="#paste"/></svg>Paste<i class="border-x-2 border-t-2 border-x-transparent border-t-gray-200"></i></button>
                <div class="flex flex-col *:flex *:h-4 *:items-center [&_svg]:size-[11px]">
                    <button aria-label="Cut"><svg><use href="#cut"/></svg></button>
                    <button aria-label="Copy clip"><svg><use href="#clip"/></svg></button>
                    <button aria-label="Paste special"><svg><use href="#special"/></svg></button>
                </div>
            </div>
            <h2 class="flex flex-1 items-center justify-center">Clipboard</h2>
        </section>
    </div>

    <!-- Drawing file tabs -->
    <nav class="flex h-[17px] shrink-0 items-end bg-[#353437] pl-[14px] [&_button]:h-[15px]">
        <button class="w-[82px] rounded-tl-[8px] bg-[#4b4a4d] pl-[7px] text-left text-[#aaa9ac]">Start</button>
        <button class="flex w-[101px] items-center gap-[9px] rounded-t-[8px] bg-[#6b6a6d] pl-[6px] text-white">profile view display*<span class="text-[#8d8c8f]">×</span></button>
        <button aria-label="New drawing" class="ml-[1px] w-[16px] rounded-t-[5px] bg-[#4b4a4d] text-[11px]">+</button>
    </nav>

    <main class="flex min-h-0 flex-1">
        <!-- Toolspace palette -->
        <aside class="flex w-[245px] shrink-0 flex-col bg-[#58575a]">
            <h2 class="flex h-[17px] shrink-0 items-center bg-[#4e4d50] pl-[6px]">TOOLSPACE</h2>
            <div class="flex h-[17px] shrink-0 items-center gap-[10px] pr-[5px] pl-[4px]">
                <button aria-label="Item view" class="mr-auto"><svg class="size-2" viewBox="0 0 8 8"><path d="M1 1h5v5H1z" fill="#eee"/><path d="M5 5h2v2H5z" fill="#aaa"/></svg></button>
                <button aria-label="Preview"><svg class="size-2" viewBox="0 0 8 8"><path d="M1 1h3v3H1zM3 4h1v2H3zM4 5h4v3H4z" fill="#ddd"/></svg></button>
                <button aria-label="Panorama"><svg class="size-2" viewBox="0 0 8 8"><path d="M0 1h8v6H0z" fill="#eee"/></svg></button>
                <button aria-label="Help" class="flex size-2 items-center justify-center bg-[#eee] font-bold text-[#333]">?</button>
            </div>
            <label class="flex h-[13px] shrink-0 items-center border-y border-[#9d9ca0] bg-[#dbdbdc] pr-[3px] pl-[1px] text-[#222]">
                <select aria-label="View" class="flex-1 appearance-none"><option>Active Drawing View</option></select>
                <svg class="h-1 w-[6px]" viewBox="0 0 6 4"><path d="M0 0l3 3 3-3" fill="none" stroke="#444" stroke-width=".8"/></svg>
            </label>
            <div class="min-h-[140px] flex-[368] bg-[#fcfbfd] pt-[2px] text-[#333]">
                <ul id="tree" class="grid h-[286px] auto-rows-fr"></ul>
            </div>
            <div class="mt-[1px] flex-[160] bg-[#565558]"></div>
        </aside>
        <div class="flex w-[17px] shrink-0 flex-col border-r border-[#77767a] bg-[#5b5a5d] pt-4 text-[#a5a4a7] *:flex *:items-center *:justify-center *:border-b *:border-[#3d3c3f] *:[writing-mode:vertical-rl]">
            <button class="h-[78px] bg-[#5f5e61] text-[#dddcdf]"><span class="rotate-180">Prospector</span></button>
            <button class="h-[79px] bg-[#4a494c]"><span class="rotate-180">Settings</span></button>
            <button class="h-[79px] bg-[#4a494c]"><span class="rotate-180">Survey</span></button>
            <button class="h-[79px] bg-[#4a494c]"><span class="rotate-180">Toolbox</span></button>
        </div>

        <!-- Drawing area -->
        <div class="relative min-w-0 flex-1 overflow-hidden border-t border-[#5c5b5e] bg-black">
            <svg id="drawing" class="absolute inset-0 h-full w-full font-['Liberation_Sans',Arial,sans-serif]"></svg>
            <p class="absolute top-0 left-[1px] font-['Liberation_Sans',sans-serif] text-[6px] text-[#ccc]">[−][Top][2D Wireframe]</p>
            <div class="absolute top-[4px] right-[3px] flex gap-[3px]">
                <button aria-label="Minimize drawing"><svg class="size-[6px]" viewBox="0 0 6 6"><path d="M1 4h4" stroke="#eee"/></svg></button>
                <button aria-label="Restore drawing"><svg class="size-[6px]" viewBox="0 0 6 6"><path d="M1 2h3v3H1zM2 1h3v3" fill="none" stroke="#eee" stroke-width=".9"/></svg></button>
                <button aria-label="Close drawing"><svg class="size-[6px]" viewBox="0 0 6 6"><path d="M1 1l4 4M5 1L1 5" stroke="#eee"/></svg></button>
            </div>
            <!-- View cube -->
            <svg class="absolute top-[16px] right-[4px] h-[80px] w-[64px] font-['Liberation_Sans',sans-serif]" viewBox="0 0 64 80">
                <circle cx="32" cy="31" r="24" fill="none" stroke="#37373a" stroke-width="5"/>
                <rect x="21" y="20" width="23" height="23" fill="#c9c9cc"/>
                <g text-anchor="middle" fill="#d6d6d6" font-size="10" font-weight="bold">
                    <text x="32" y="10" stroke="#000" stroke-width="2" paint-order="stroke">N</text>
                    <text x="32" y="60" stroke="#000" stroke-width="2" paint-order="stroke">S</text>
                    <text x="7" y="35" stroke="#000" stroke-width="2" paint-order="stroke">W</text>
                    <text x="57" y="35" stroke="#000" stroke-width="2" paint-order="stroke">E</text>
                    <text x="32" y="34" fill="#55555a" font-size="6">TOP</text>
                </g>
                <rect x="22" y="70" width="21" height="8" rx="2" fill="#98979b"/>
                <text x="24" y="76" font-size="5" fill="#66656a">WCS</text>
            </svg>
            <!-- UCS icon -->
            <svg class="absolute bottom-[8px] left-[10px] h-[38px] w-[36px] font-['Liberation_Sans',sans-serif]" viewBox="0 0 36 38">
                <path d="M3.500 9v22M6 33.500h20M1.500 31.500h4v4h-4z" fill="none" stroke="#a8a8a8"/>
                <text x="4" y="8" font-size="9" fill="#c0c0c0">Y</text>
                <text x="27" y="34" font-size="9" fill="#c0c0c0">X</text>
            </svg>
            <!-- Command line -->
            <div class="absolute bottom-0 left-[398px] w-[223px] font-['Liberation_Mono',monospace] text-[12px] leading-[16px]">
                <div class="mb-[2px] flex flex-col items-start gap-1 pl-10 whitespace-pre">
                    <p class="bg-[#131214] px-[1px] text-[#3f3e41]">** STRETCH **</p>
                    <p class="bg-[#171618] px-[1px] text-[#535255]">Specify stretch point or
[Base point/Copy/Undo/
eXit]:</p>
                    <p class="bg-[#1d1c1e] px-[1px] text-[#747376]">Command: *Cancel*</p>
                </div>
                <div class="flex h-[17px] items-center bg-[#434245]">
                    <button aria-label="Close command line" class="ml-[9px]"><svg class="size-[7px]" viewBox="0 0 8 8"><path d="M1 1l6 6M7 1L1 7" stroke="#ddd" stroke-width="1.500"/></svg></button>
                    <button aria-label="Customize" class="ml-[7px]"><svg class="size-[9px]" viewBox="0 0 10 10"><path d="M4 4l5 5" stroke="#ddd" stroke-width="2"/><path d="M1 2l2 1V1q3 0 3 3L4 6Q1 5 1 2z" fill="#ddd"/></svg></button>
                    <label class="ml-auto flex h-full w-[187px] items-center bg-[#a9a9aa] pr-[3px] pl-[3px]">
                        <svg class="h-[9px] w-[16px] shrink-0" viewBox="0 0 16 9"><rect width="10" height="9" rx="1" fill="#858487"/><path d="M2 2l2 2-2 2M5 7h3" fill="none" stroke="#e0e0e0"/><path d="M12 4h4l-2 2z" fill="#555"/></svg>
                        <input aria-label="Command" placeholder="Type a command" class="ml-[4px] min-w-0 flex-1 italic placeholder:text-[#565558]">
                        <i class="border-x-[3px] border-b-[3px] border-x-transparent border-b-black"></i>
                    </label>
                </div>
            </div>
        </div>
    </main>

    <!-- Layout tabs and status bar -->
    <footer class="flex h-8 shrink-0 items-start justify-between border-t border-[#59585b] bg-[#38373a]">
        <nav class="flex h-[15px] items-center bg-[#4a494c]">
            <button class="h-full w-[50px] rounded-br-[6px] bg-[#5e5d60] pl-[4px] font-bold text-white">Model</button>
            <button class="w-[36px]">Layout1</button>
            <button class="w-[50px]">Layout2</button>
            <button aria-label="New layout" class="w-[16px] text-[11px]">+</button>
        </nav>
        <div class="flex h-[17px] items-center self-end border-t border-l border-[#6d6c70] bg-[#4b4a4d] text-white *:flex *:h-full *:items-center *:justify-center">
            <button class="w-[34px] border-r border-[#6d6c70]">MODEL</button>
            <button aria-label="Ortho" class="w-[17px] border-r border-[#6d6c70]"><svg class="size-[10px]" viewBox="0 0 10 10"><path d="M1 0v8h9M1 5h3v3" fill="none" stroke="#a6a5a8"/></svg></button>
            <button aria-label="Object snap" class="w-[28px] gap-[5px] border-r border-[#6d6c70]"><svg class="size-[10px]" viewBox="0 0 10 10"><path d="M1 2h8v7H1z" fill="none" stroke="#c4c3c6"/><path d="M0 0h4v4H0z" fill="#2fa04a"/></svg><i class="border-x-2 border-t-[3px] border-x-transparent border-t-gray-100"></i></button>
            <button aria-label="Annotation visibility" class="w-[20px]"><svg class="size-3" viewBox="0 0 12 12"><path d="M6 1v5L2 11M6 6l4 5" fill="none" stroke="#4a9cf0" stroke-width="2"/><circle cx="7.500" cy="3" r="2" fill="#4a9cf0"/></svg></button>
            <button aria-label="Auto scale" class="w-[15px]"><svg class="size-3" viewBox="0 0 12 12"><path d="M5 3v3l-3 5M5 6l4 5" fill="none" stroke="#b4b3b6" stroke-width="1.800"/><path d="M10 0L7 4h2L7 7" stroke="#b4b3b6" fill="none"/></svg></button>
            <button aria-label="Annotation scale" class="w-[16px]"><svg class="size-3" viewBox="0 0 12 12"><path d="M6 1v5l-4 5M6 6l4 5" fill="none" stroke="#c4c3c6" stroke-width="1.800"/></svg></button>
            <button class="w-[61px] gap-[2px] border-r-2 border-[#6d6c70]">1:1000 / 100%<i class="border-x-2 border-t-[3px] border-x-transparent border-t-gray-100"></i></button>
            <button aria-label="Workspace switching" class="w-[30px] gap-[6px] border-r border-[#6d6c70] text-[#d0cfd2]"><svg class="size-[9px]"><use href="#gear"/></svg><i class="border-x-2 border-t-[3px] border-x-transparent border-t-gray-100"></i></button>
            <button aria-label="Annotation monitor" class="w-[17px] border-r-2 border-[#6d6c70]"><svg class="size-[10px]" viewBox="0 0 10 10"><path d="M5 0v10M0 5h10" stroke="#b9b8bb" stroke-width="1.300"/></svg></button>
            <button class="w-[46px] gap-[6px] border-r border-[#6d6c70]"><svg class="size-3" viewBox="0 0 12 12"><path d="M1 3l5-2 5 2-5 2z" fill="#c8c8c8"/><path d="M1 6l5-2 5 2-5 2z" fill="#5fae4e"/><path d="M1 9l5-2 5 2-5 2z" fill="#a8a8a8"/></svg>3.500</button>
            <button aria-label="Isolate objects" class="w-[17px] border-r-2 border-[#6d6c70]"><svg class="size-3" viewBox="0 0 12 12"><path d="M1 1h4v4H1zM7 2h4v4H7zM4 7h4v4H4z" fill="none" stroke="#9b9a9d"/></svg></button>
            <button aria-label="Hardware acceleration" class="w-[17px]"><svg class="size-3" viewBox="0 0 12 12"><path d="M0 1h11v9H0z" fill="#f2f2f2"/><path d="M1 8l3-5 3 3 2 2" fill="none" stroke="#444"/><path d="M8 11l2-4 2 4z" fill="#d8603a"/></svg></button>
            <button aria-label="Clean screen" class="w-[17px] border-r border-[#6d6c70]"><svg class="size-3" viewBox="0 0 12 12"><path d="M2 1h6v5H2z" fill="#5a8fd0"/><path d="M4 5h6v3H4z" fill="#e8d84c"/><path d="M2 8h8v3H2z" fill="#63b04a"/></svg></button>
            <button aria-label="Customization" class="w-[16px]"><svg class="size-[10px]" viewBox="0 0 10 10"><path d="M0 1.500h10M0 5h10M0 8.500h10" stroke="#c4c3c6"/></svg></button>
        </div>
    </footer>

    <script>
        // level, label, icon, toggle: '-' open, '+' closed, '*' bullet
        const items = [
            [0, 'profile view display', 't-dwg', '-'],
            [1, 'Points', 't-points', '*'],
            [1, 'Point Groups', 't-group', '+'],
            [1, 'Point Clouds', 't-cloud', ''],
            [1, 'Surfaces', 't-surface', '+'],
            [1, 'Alignments', 't-align', '+'],
            [1, 'Feature Lines', 't-feature', ''],
            [1, 'Sites', 't-site', '+'],
            [1, 'Catchments', 't-catch', ''],
            [1, 'Pipe Networks', 't-pipe', '+'],
            [1, 'Pressure Networks', 't-pipe', ''],
            [1, 'Corridors', 't-corr', ''],
            [1, 'Assemblies', 't-assem', '+'],
            [1, 'Intersections', 't-inter', ''],
            [1, 'Survey', 't-survey', '+'],
            [1, 'View Frame Groups', 't-frame', ''],
            [0, 'Data Shortcuts []', 't-short', '-'],
            [1, 'Surfaces', 't-surface', ''],
            [1, 'Alignments', 't-align', '+'],
            [1, 'Pipe Networks', 't-pipe', ''],
            [1, 'Pressure Networks', 't-pipe', ''],
            [1, 'Corridors', 't-corr', ''],
            [1, 'View Frame Groups', 't-frame', '']
        ];

        // Each toggle also carries the vertical connector of its branch
        const toggles = {
            '-': '<path d="M1.5 3.500h5v5h-5z" fill="#fff" stroke="#aaa"/><path d="M3 6h2" stroke="#444"/>',
            '+': '<path d="M4.5 0v12" stroke="#ddd"/><path d="M2 3.500h5v5H2z" fill="#fff" stroke="#aaa"/><path d="M3 6h3M4.500 4.500v3" stroke="#888"/>',
            '*': '<path d="M4.500 0v12M4.500 6h4" stroke="#ddd"/><circle cx="4.500" cy="6" r="1.500" fill="#111"/>',
            '': '<path d="M4.500 0v12M4.500 6h4" stroke="#ddd"/>'
        };

        document.getElementById('tree').innerHTML = items.map(([level, label, icon, toggle]) => `
            <li class="flex items-center ${level ? 'pl-[10px]' : 'pl-[2px]'}">
                <svg class="h-full w-2 shrink-0" viewBox="0 0 8 12">${toggles[toggle]}</svg>
                <svg class="mr-[2px] size-[9px] shrink-0"><use href="#${icon}"/></svg>
                <span class="${label === 'profile view display' ? 'font-bold text-black' : ''}">${label}</span>
            </li>`).join('');

        // Profile view grid: a station line every 69px, a label on every fourth
        let svg = '<path d="M6 159.500h2600" stroke="#140e66" stroke-width="2"/>';
        for (let x = 7; x < 2600; x += 69) {
            svg += `<path d="M${x + .5} 0v160" stroke="#4c4c4e"/><path d="M${x + .5} 160v17" stroke="#7a4650"/>`;
        }
        svg += '<path d="M0 21.500h2600M0 90.500h2600" stroke="#4c4c4e"/>';
        for (let i = 0; i < 4; i++) {
            const x = 7 + i * 276;
            const label = '0+' + (320 + i * 20);
            svg += `<g font-size="67" text-anchor="middle" fill="#f4708a" stroke="#f4708a"><text x="${x}" y="224">${label}</text><text x="${x}" y="233">${label}</text></g>`;
        }
        // cursor
        svg += '<path d="M353 174.500h30M388 174.500h29M385.500 142v30M385.500 177v30M383.500 172.500h4v4h-4z" fill="none" stroke="#8a8a8c"/>';
        document.getElementById('drawing').innerHTML = svg;
    </script>
</body>
</html>
